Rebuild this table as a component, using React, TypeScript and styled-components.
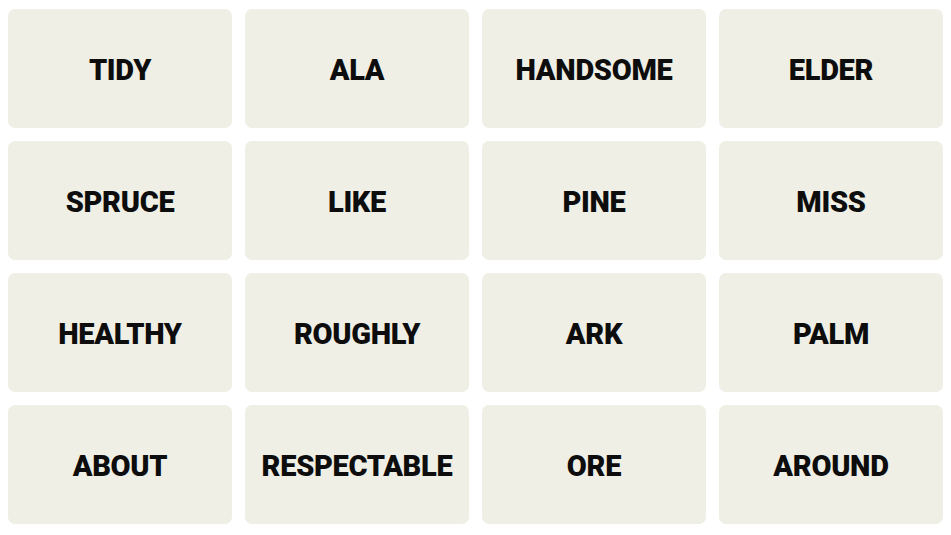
import styled, { createGlobalStyle } from "styled-components";

const GlobalStyle = createGlobalStyle`
  html, body {
    margin: 0;
    padding: 0;
    background: #fff;
  }
`;

const Board = styled.div`
  display: grid;
  grid-template-columns: repeat(4, 224px);
  grid-auto-rows: 119px;
  gap: 13px;
  padding: 9px 8px;
`;

const Tile = styled.button`
  display: flex;
  align-items: center;
  justify-content: center;
  border: none;
  border-radius: 7px;
  background-color: #efefe6;
  color: #0d0d0d;
  font-family: Roboto, "Liberation Sans", sans-serif;
  font-weight: 900;
  font-size: 29px;
  letter-spacing: -0.3px;
  text-transform: uppercase;
  padding: 2px 0 0;
  cursor: pointer;
`;

const words = [
  "TIDY", "ALA", "HANDSOME", "ELDER",
  "SPRUCE", "LIKE", "PINE", "MISS",
  "HEALTHY", "ROUGHLY", "ARK", "PALM",
  "ABOUT", "RESPECTABLE", "ORE", "AROUND",
];

export default function App() {
  return (
    <>
      <GlobalStyle />
      <Board>
        {words.map((w) => (
          <Tile key={w}>{w}</Tile>
        ))}
      </Board>
    </>
  );
}
